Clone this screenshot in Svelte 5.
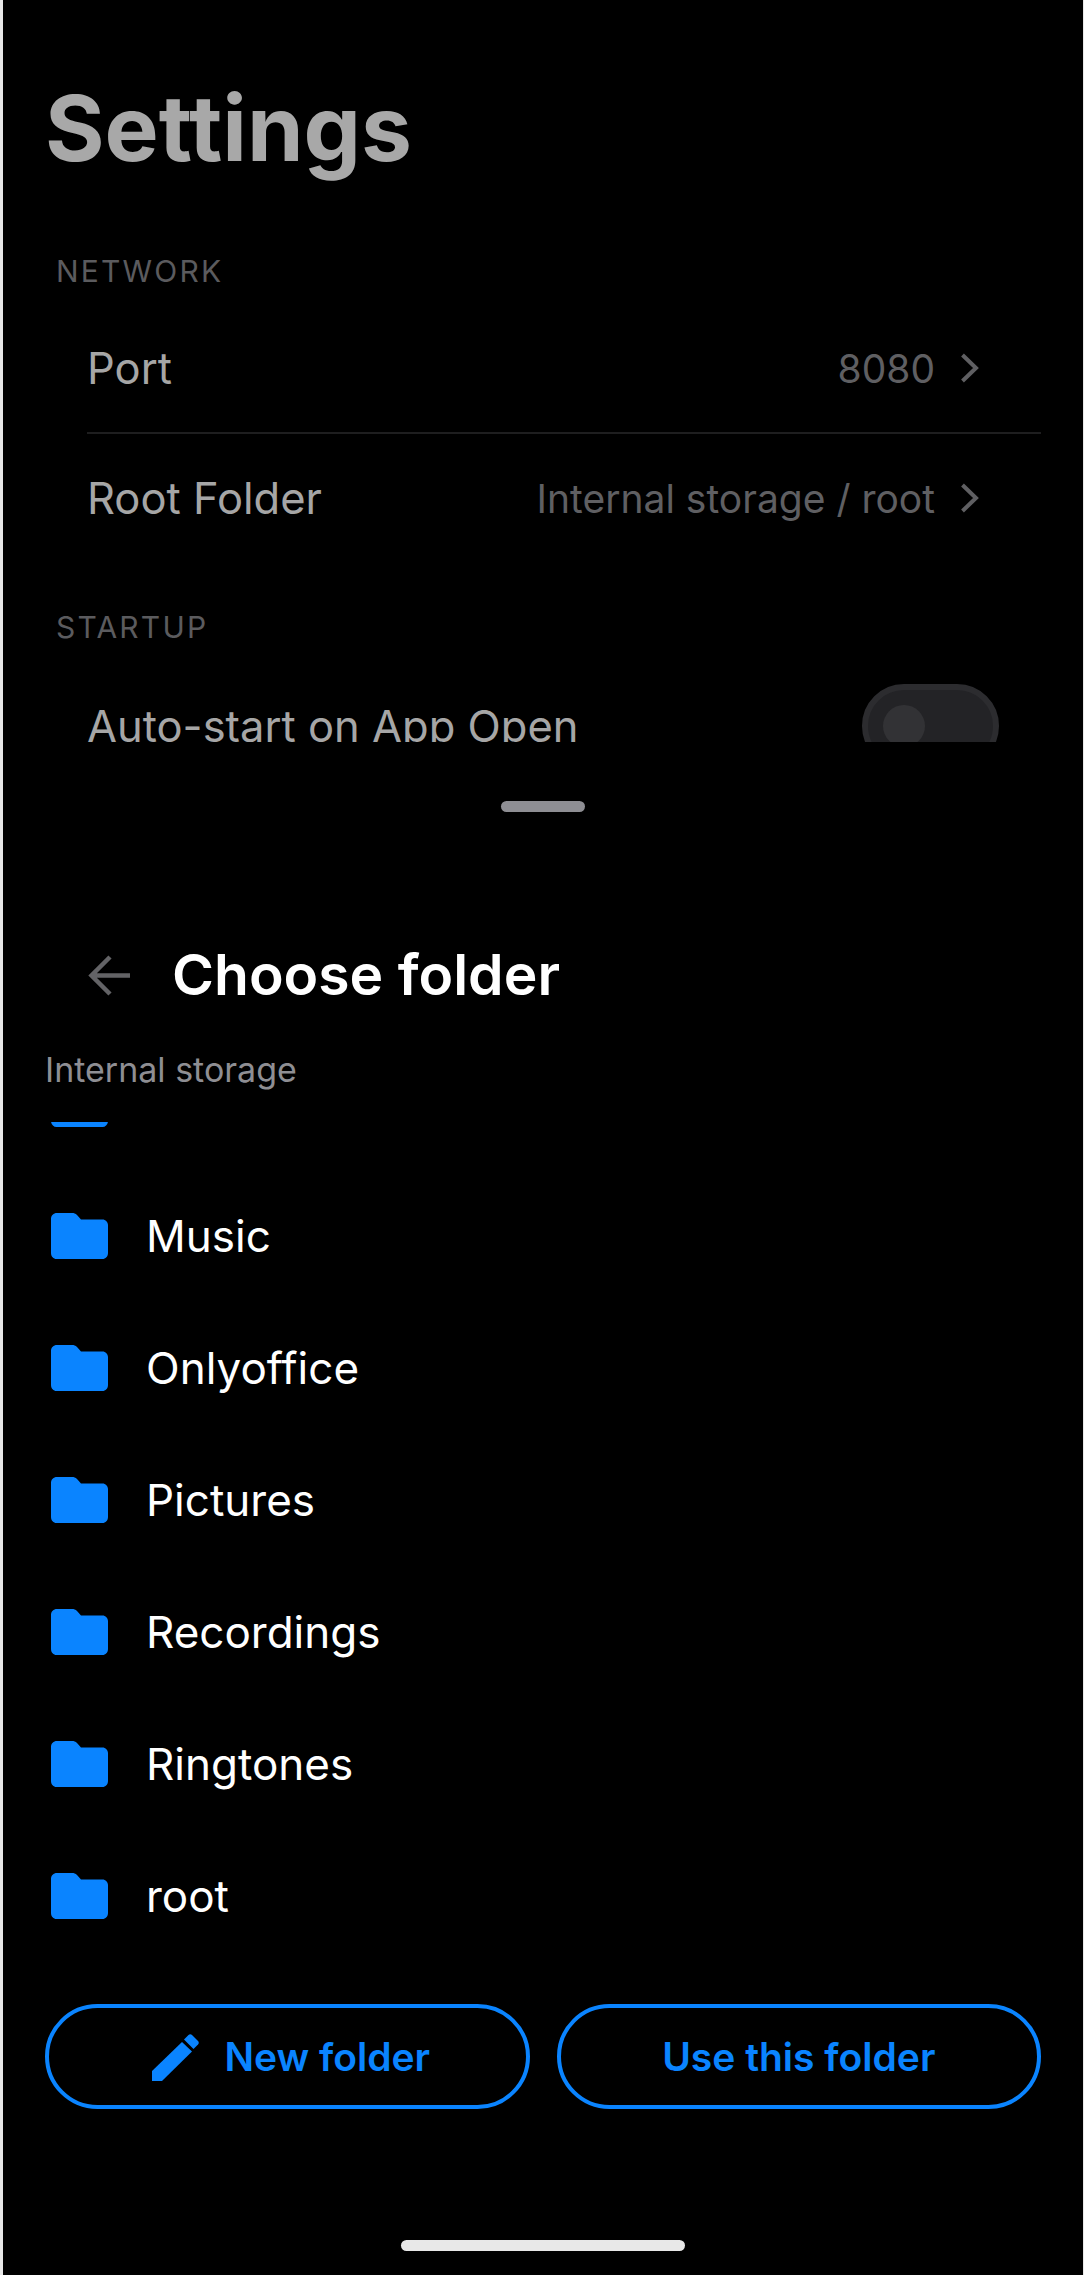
<script>
	const folders = ['Music', 'Onlyoffice', 'Pictures', 'Recordings', 'Ringtones', 'root'];
	const folderPath = 'M6 0h15c2 0 3.500.5 5 2l4 4.500h21.500c3 0 5.500 2.500 5.500 5.500v28c0 3.500-2.500 6-5.500 6h-46C2.500 46 0 43.500 0 40V6C0 2.500 2.500 0 6 0z';
</script>

<div class="phone">
	<div class="settings">
		<h1>Settings</h1>
		<div class="section-label">NETWORK</div>
		<div class="group">
			<div class="row divided">
				<span class="row-title">Port</span>
				<span class="row-value">8080</span>
				<svg class="chevron" viewBox="0 0 19 30"><path d="M2.500 2L16 15 2.500 28" /></svg>
			</div>
			<div class="row">
				<span class="row-title">Root Folder</span>
				<span class="row-value">Internal storage / root</span>
				<svg class="chevron" viewBox="0 0 19 30"><path d="M2.500 2L16 15 2.500 28" /></svg>
			</div>
		</div>
		<div class="section-label startup">STARTUP</div>
		<div class="row toggle-row">
			<span class="row-title">Auto-start on App Open</span>
			<div class="toggle"><div class="knob"></div></div>
		</div>
	</div>

	<div class="sheet">
		<div class="grabber"></div>
		<header>
			<svg class="back" viewBox="0 0 42 41"><path d="M42 20.500H4M22 2L3.500 20.500 22 39" /></svg>
			<h2>Choose folder</h2>
		</header>
		<div class="crumb">Internal storage</div>
		<div class="list">
			<div class="folder-row">
				<svg class="folder" viewBox="0 0 57 46"><path d={folderPath} /></svg>
			</div>
			{#each folders as name}
				<div class="folder-row">
					<svg class="folder" viewBox="0 0 57 46"><path d={folderPath} /></svg>
					<span>{name}</span>
				</div>
			{/each}
		</div>
		<div class="actions">
			<button>
				<svg class="pencil" viewBox="0 0 48 48">
					<path d="M0 38L30 9l10 9.500L10 48H0z" />
					<path d="M32 6.500L36.500 2c1-1 2.500-1 3.500 0l6 6c1 1 1 2.500 0 3.500L41.500 16z" />
				</svg>
				New folder
			</button>
			<button>Use this folder</button>
		</div>
		<div class="home-bar"></div>
	</div>
</div>

<style>
	:global(body) {
		background: #000;
	}

	.phone {
		width: 1084px;
		height: 2275px;
		box-sizing: border-box;
		background: #000;
		border-left: 3px solid #e8e8e8;
		border-right: 1px solid #e8e8e8;
		font-family: Inter, "Liberation Sans", sans-serif;
		display: flex;
		flex-direction: column;
		overflow: hidden;
	}

	.settings {
		height: 742px;
		box-sizing: border-box;
		overflow: hidden;
		padding: 72px 42px 0 42px;
		flex-shrink: 0;
	}

	h1 {
		margin: 0;
		font-size: 91px;
		line-height: 112px;
		font-weight: 700;
		color: #a8a8a8;
	}

	.section-label {
		margin: 69px 0 0 11px;
		font-size: 30px;
		line-height: 36px;
		letter-spacing: 2.2px;
		color: #5b5b5e;
	}

	.section-label.startup {
		margin-top: 47px;
	}

	.group {
		margin-top: 15px;
	}

	.row {
		display: flex;
		align-items: center;
		height: 128px;
		margin-left: 42px;
		box-sizing: border-box;
		padding-right: 62px;
	}

	.row.divided {
		border-bottom: 2px solid #1e1e1f;
		height: 130px;
	}

	.row-title {
		font-size: 43.500px;
		color: #a6a6a6;
		flex: 1;
	}

	.row-value {
		font-size: 39px;
		color: #5f5f62;
	}

	.chevron {
		width: 19px;
		height: 30px;
		margin-left: 25px;
		fill: none;
		stroke: #5f5f62;
		stroke-width: 4;
	}

	.toggle-row {
		margin-top: 17px;
		padding-right: 42px;
	}

	.toggle {
		width: 137px;
		height: 84px;
		border-radius: 42px;
		background: #232326;
		border: 6px solid #2c2c2f;
		box-sizing: border-box;
		display: flex;
		align-items: center;
		padding-left: 15px;
	}

	.knob {
		width: 42px;
		height: 42px;
		border-radius: 50%;
		background: #323235;
	}

	.sheet {
		flex: 1;
		display: flex;
		flex-direction: column;
		min-height: 0;
		padding: 0 42px;
	}

	.grabber {
		width: 84px;
		height: 11px;
		border-radius: 6px;
		background: #8e8e93;
		margin: 59px auto 0;
	}

	header {
		display: flex;
		align-items: center;
		gap: 42px;
		margin: 128px 0 0 43px;
		height: 70px;
	}

	.back {
		width: 42px;
		height: 41px;
		fill: none;
		stroke: #636366;
		stroke-width: 4.500;
	}

	h2 {
		margin: 0;
		font-size: 57px;
		line-height: 70px;
		font-weight: 600;
		color: #fff;
	}

	.crumb {
		margin-top: 34px;
		font-size: 34px;
		line-height: 52px;
		color: #8e8e93;
	}

	.list {
		height: 840px;
		flex-shrink: 0;
		overflow: hidden;
		margin-top: 26px;
		display: flex;
		flex-direction: column;
		justify-content: flex-end;
	}

	.folder-row {
		display: flex;
		align-items: center;
		height: 132px;
		flex-shrink: 0;
		font-size: 44px;
		color: #fff;
		padding-left: 6px;
		gap: 38px;
	}

	.folder {
		width: 57px;
		height: 46px;
		flex-shrink: 0;
		fill: #0a84ff;
	}

	.actions {
		display: grid;
		grid-template-columns: 1fr 1fr;
		gap: 27px;
		margin-top: 42px;
	}

	button {
		height: 105px;
		border-radius: 53px;
		background: transparent;
		border: 4px solid #0a84ff;
		color: #0a84ff;
		font: 600 39px Inter, "Liberation Sans", sans-serif;
		display: flex;
		align-items: center;
		justify-content: center;
		gap: 24px;
	}

	.pencil {
		width: 48px;
		height: 48px;
		margin-left: 8px;
		fill: #0a84ff;
	}

	.home-bar {
		width: 284px;
		height: 11px;
		border-radius: 6px;
		background: #e8e8e8;
		margin: 131px auto 0;
	}
</style>
